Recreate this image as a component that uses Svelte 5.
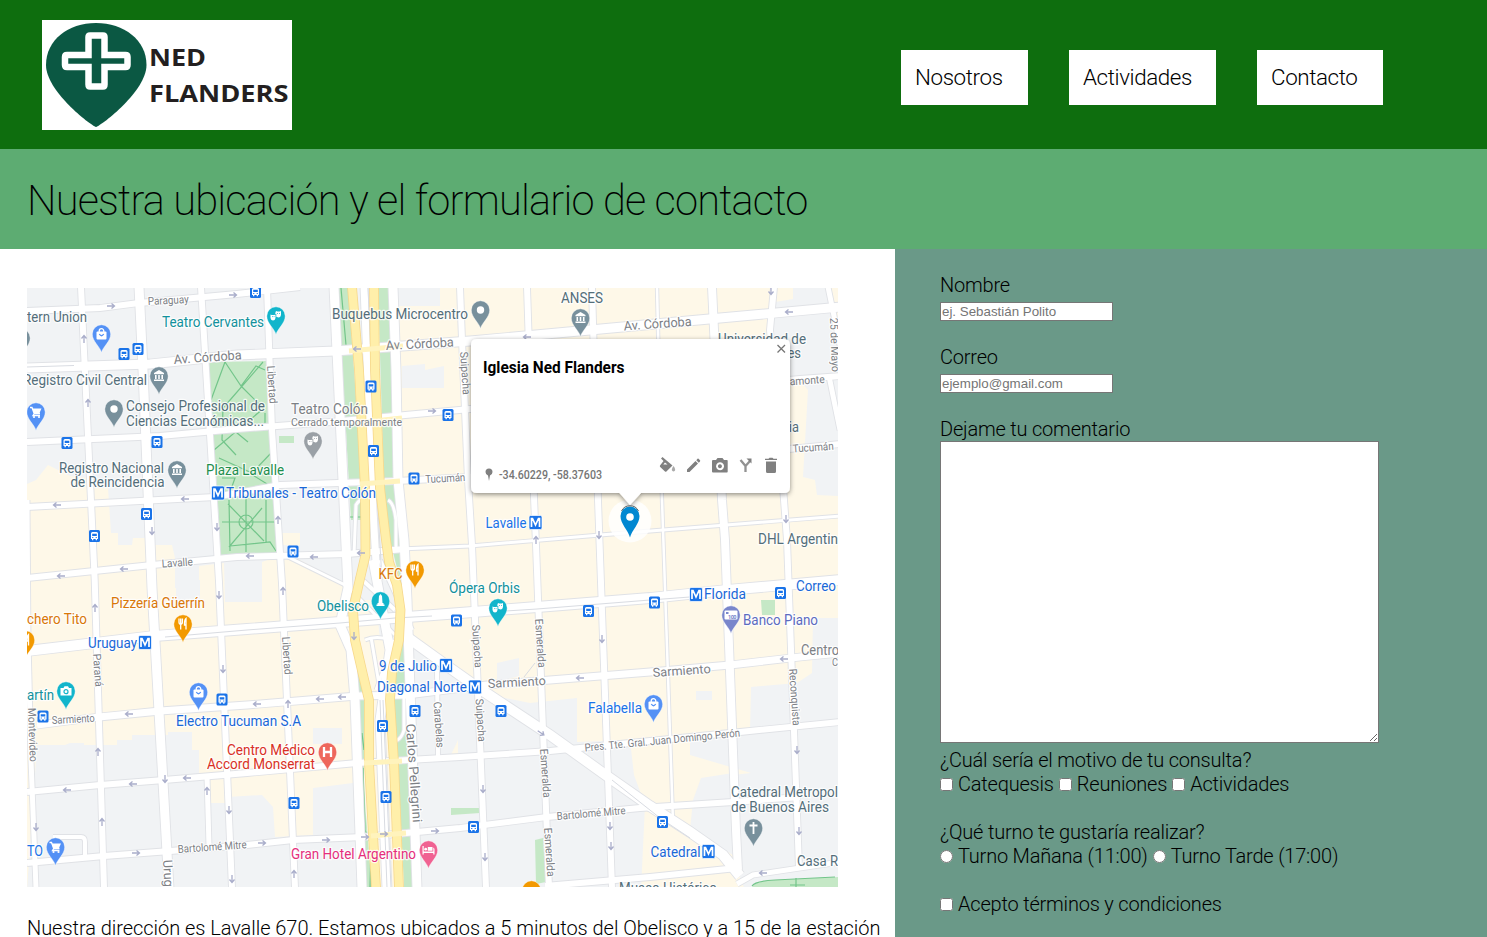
<script>
  const links = [
    { label: 'Nosotros', width: 127 },
    { label: 'Actividades', width: 147 },
    { label: 'Contacto', width: 126 }
  ];

  const grays = [
    'M27 288H440V306H397L400 480L405 600H358L347 585L300 560H278V545H300V533H282L280 555L262 562V602H225L224 563L199 566V588H175V558L172 545H155V538H133L132 545H118V533H111L108 488H95L88 478L70 476L48 465L36 480L27 484Z',
    'M37 745H65L70 743H84V745H117V740H132V735H168V732H192V750H199V776H210V803H227V797L262 795L273 807L275 837L313 835V788L353 783L360 890H27Z',
    'M400 625L470 690L458 700V740L450 757V800H410L405 700Z',
    'M405 760L458 757V690H475L500 697L530 703L577 698V742L630 740L634 775L645 805L641 890H405Z',
    'M402 366L425 364V370L444 366V388H402Z',
    'M497 663L519 658V676L497 682Z',
    'M313 728H342V744H313ZM176 580H200V605H176ZM375 590L410 590L412 640H380Z',
    'M775 302L793 299V288H829L838 320V496L817 495L815 480L803 477L808 390L798 378H770Z',
    'M813 618H838V890H745L737 870L733 775L751 773L690 755V738L750 732L751 687L797 683L812 673Z',
    'M696 691H712V700H696ZM693 800L701 778L733 773V855L690 830Z'
  ];

  const greens = [
    'M209 362L267 361L278 553L221 555Z',
    'M338 288H348L365 520H351Z',
    'M378 288H389L396 400L400 480L405 600L385 520Z',
    'M353 660L364 676V790L372 890H366L361 830Z',
    'M391 670L404 630L408 700L417 887H404L398 763Z',
    'M279 436H294V443H279ZM451 808H480V813L451 815ZM535 840L543 838L546 882L536 884ZM761 600H775V615H762Z',
    'M752 887Q755 881 775 880L838 877V887Z'
  ];

  const streets = [
    ['M27 311L100 308L139 303L237 294L300 287', 6],
    ['M27 368L150 364L237 355L335 351L470 341L590 330L720 318L840 307', 9],
    ['M27 442L160 436L237 429L330 422L470 409L800 379L840 376', 6],
    ['M27 507L215 497L280 485L397 481L470 477L800 448L840 444', 6],
    ['M27 578L152 565L237 557L347 554L405 549', 6],
    ['M400 549L470 546L600 535L840 516', 3],
    ['M37 725L99 717L160 711L247 705L357 696L407 695L487 685L550 680L650 672L730 665L800 657L840 653', 7],
    ['M27 792L100 785L164 780L247 773L357 763L460 757L550 751L620 744L740 732L840 722', 6],
    ['M27 863L104 856L170 851L247 845L293 840L363 837L460 828L547 817L640 808L733 802L800 797', 6],
    ['M545 886L650 877L737 868', 6],
    ['M737 884L753 875L800 868L840 862', 5],
    ['M27 500L28 640L31 760L36 888', 5],
    ['M81 287L94.7 580L104 888', 6],
    ['M139 287L143 370L152 588L169 888', 9],
    ['M201 287L219 582L232 888', 6],
    ['M207 776L209 846', 5],
    ['M53 837H81Q85 837 85 842V856', 4],
    ['M267 287L272 430L282 584L295 888', 6],
    ['M460 287L462 340L468 480L472 545L486 888', 6],
    ['M527 287L534 497L536 545L549 888', 6],
    ['M592 287L598 500L612 888', 6],
    ['M657 287L662 500L673 822', 2.5],
    ['M712 287L722 500L725 540L736 830L738 870', 8],
    ['M774 287L770 330L784 500L787 540L799 868', 6],
    ['M828 287L840 345M829 376L840 430', 5],
    ['M437 670L438 757', 4],
    ['M286 556L347 586L395 635', 3],
    ['M357 575L395 610M380 560L412 630', 4],
    ['M27 651L154 636L247 629L340 622L407 617L460 613L537 607L650 598L727 590L840 580', 10],
    ['M365 640Q376 635 392 640M371 637L380 690M394 640L376 690', 3],
    ['M407 637L450 668L477 687L550 735L607 776L650 806L690 832L723 855L740 876', 10],
    ['M334 287L348 588L340 625L351 650L355 700L362 888', 9],
    ['M393 287L396 370L398 480L404 540L407 600L409 660L417 888', 9],
    ['M364 287L373 510L377 580', 7],
    ['M373 560L390 650L380 720L387 888', 9],
    ['M354 555L356 505Q360 498 366 499M388 500Q394 503 396 520V548M404 690V730Q402 738 396 741', 3]
  ];

  const avenues = [
    'M352 287L359 370L365 488L365.5 555L359 583L353 610L355 640L363 675L369 700L369 763L376 888',
    'M374 287L375 370L380 488L386 540L389 562L397 585L400.5 610L399 640L392 672L390 700L394 763L399 888'
  ];

  const paths = [
    'M225 362L241 386L256 366L265 370M225 362L211 400M263 362L224 407M241 386L263 408M223 407L222 440L236 455M264 408L214 450M219 458L252 473L272 452M251 474L272 487M222 478H235L229 495M265 413V430M231 428L248 442',
    'M228 504L264 541M229 547L262 508M222 522H276M246 498V552M229 500L230 551M230 546L270 542L276 551M266 500V543M239 522A7 7 0 1 0 253 522A7 7 0 1 0 239 522',
    'M341 288L346 345M362 733L364 750M363 768L365 830L371 845L370 888M348 517H362',
    'M752 886Q755 881 775 880L835 877M796 878V887M790 885H805'
  ];

  const pins = [
    [276, 316, '#12b5cb', 'mask'], [101.5, 334, '#5491f5', 'bag'], [159, 376, '#78909c', 'bank'],
    [114, 409, '#78909c', 'dot'], [36, 412, '#5491f5', 'cart'], [177, 470, '#78909c', 'bank'],
    [313, 441, '#9aa0a6', 'mask'], [480.5, 310, '#78909c', 'dot'], [580.5, 318, '#78909c', 'bank'],
    [415, 570, '#f29900', 'food'], [380.5, 601, '#12b5cb', 'obelisk'], [498, 608, '#12b5cb', 'mask'],
    [183, 624, '#f29900', 'food'], [25.5, 640, '#f29900', 'food'], [66, 691, '#12b5cb', 'camera'],
    [198.5, 692, '#5491f5', 'bag'], [327.5, 752, '#ee675c', 'hospital'], [428.5, 850, '#f06292', 'bed'],
    [653.5, 704, '#5491f5', 'bag'], [731, 615, '#7986cb', 'money'], [753.5, 828, '#78909c', 'cross'],
    [55.5, 847, '#5491f5', 'cart'], [21, 338, '#78909c', 'dot'], [531.5, 890, '#f29900', 'plain']
  ];

  const buses = [
    [255.5, 292], [124, 354], [138, 349], [67, 443], [157, 442], [146.5, 514], [94.5, 536], [371, 386.5],
    [448, 415], [373.5, 451], [414, 478.5], [293, 551.5], [588.5, 611], [654.5, 602.5], [780.5, 593],
    [456.5, 620.5], [222, 699.5], [43, 716.5], [415, 711], [382.5, 726], [501, 711], [386, 797],
    [294, 803], [473.5, 827], [662.5, 822]
  ];

  const metros = [[218, 493], [535.5, 522.5], [145, 642.5], [446, 665.5], [475, 687], [696, 594.5], [708.5, 851.5]];

  // x, y, angle in degrees (0 points right)
  const arrows = [
    [111, 306, 0], [233, 295, 0], [84, 339, -90], [88, 403, -90], [57, 505, 180], [185, 499, 180],
    [152, 531, 90], [217, 527, 90], [61, 576, 180], [124, 569, 180], [250, 556, 180], [314, 557, 180],
    [361, 553, 180], [278, 520, -90], [357, 349, 180], [432, 411, 0], [527, 337, 180], [771, 291, 90],
    [789, 312, 180], [536, 540, -90], [599, 535, 90], [786, 519, 90], [95, 608, -90], [219, 595, 90],
    [223, 669, 90], [283, 591, -90], [354, 636, 90], [129, 714, 180], [288, 704, -90], [257, 704, 180],
    [320, 699, 180], [342, 697, 180], [98, 752, -90], [67, 790, 180], [133, 784, 180], [165, 779, 90],
    [187, 778, 180], [207, 791, -90], [36, 827, 90], [102, 822, -90], [136, 853, 0], [229, 810, 90],
    [232, 879, 90], [262, 843, 0], [326, 840, 0], [365, 837, 0], [384, 834, 0], [435, 831, 0], [294, 874, -90],
    [602, 639, 90], [580, 678, 180], [541, 733, 35], [483, 789, 90], [485, 857, 90], [610, 826, 90],
    [611, 846, 90], [784, 659, 180], [797, 750, 90], [799, 831, 90], [763, 873, 180]
  ];

  const slate = '#546e7a';
  const teal = '#12919c';
  const blue = '#1a68d8';
  const amber = '#d97708';
  const street = '#7c8085';
  // text, x, baseline, width, size, fill, rotation
  const labels = [
    ['Paraguay', 148, 305, 41, 11, street, -3],
    ['tern Union', 27, 322, 60, 14, slate, 0],
    ['Teatro Cervantes', 162, 326.5, 102, 14, teal, 0],
    ['Buquebus Microcentro', 332, 319, 136, 14, slate, 0],
    ['ANSES', 561, 302.5, 42, 14, slate, 0],
    ['Av. Córdoba', 174, 364, 68, 13, street, -4],
    ['Av. Córdoba', 386, 350, 68, 13, street, -3],
    ['Av. Córdoba', 624, 330.5, 68, 13, street, -4],
    ['Registro Civil Central', 23, 385, 124, 14, slate, 0],
    ['Consejo Profesional de', 126, 411, 139, 14, slate, 0],
    ['Ciencias Económicas...', 126, 425.5, 138, 14, slate, 0],
    ['Libertad', 267, 366, 38, 11, street, 86],
    ['Teatro Colón', 291, 414, 77, 14, street, 0],
    ['Cerrado temporalmente', 291, 426, 111, 11.5, street, 0],
    ['Registro Nacional', 59, 473, 105, 14, slate, 0],
    ['de Reincidencia', 70.5, 487, 94, 14, slate, 0],
    ['Plaza Lavalle', 206, 475, 78, 14, '#1e8e4e', 0],
    ['Tribunales - Teatro Colón', 226, 498, 150, 14, blue, 0],
    ['Suipacha', 460, 352, 43, 11, street, 86],
    ['Tucumán', 425.5, 483, 40, 11, street, -3],
    ['Universidad de', 718, 343.5, 88, 14, slate, 0],
    ['Buenos Aires', 725, 358, 76, 14, slate, 0],
    ['Viamonte', 781, 386, 44, 11, street, -4],
    ['Francia', 757, 432, 42, 14, slate, 0],
    ['Tucumán', 793, 452.5, 41, 11, street, -4],
    ['25 de Mayo', 830, 318, 54, 11, street, 88],
    ['Lavalle', 485.5, 528, 41, 14, '#1a73e8', 0],
    ['DHL Argentin', 758, 543.5, 80, 14, slate, 0],
    ['Lavalle', 162, 567.5, 31, 11, street, -4],
    ['KFC', 378.5, 579, 24, 14, amber, 0],
    ['Pizzería Güerrín', 111, 608, 94, 14, amber, 0],
    ['chero Tito', 27, 624, 60, 14, amber, 0],
    ['Obelisco', 317, 610.5, 52, 14, teal, 0],
    ['Ópera Orbis', 449, 592.5, 71, 14, teal, 0],
    ['Uruguay', 88, 647.5, 49, 14, blue, 0],
    ['Florida', 704, 599, 42, 14, blue, 0],
    ['Correo', 796, 591, 40, 14, blue, 0],
    ['Banco Piano', 743, 625, 75, 14, '#5c6bc0', 0],
    ['Libertad', 282, 637, 38, 11, street, 86],
    ['Paraná', 93, 654, 33, 11, street, 86],
    ['Suipacha', 472, 625, 43, 11, street, 86],
    ['Esmeralda', 535, 619, 49, 11, street, 86],
    ['Esmeralda', 540, 749, 49, 11, street, 86],
    ['Esmeralda', 544, 828, 49, 11, street, 86],
    ['Suipacha', 475.5, 699, 43, 11, street, 86],
    ['9 de Julio', 379, 671, 58, 14, blue, 0],
    ['Diagonal Norte', 377, 692, 90, 14, blue, 0],
    ['Sarmiento', 488, 688, 58, 12.5, street, -3],
    ['Sarmiento', 653, 677, 58, 12.5, street, -4],
    ['Sarmiento', 52, 724, 43, 11, street, -3],
    ['Centro', 801, 655, 38, 14, street, 0],
    ['C', 832, 666, 6, 11, street, 0],
    ['artín', 27, 700, 27, 14, teal, 0],
    ['Montevideo', 28, 708, 54, 11, street, 88],
    ['Electro Tucuman S.A', 176, 726, 125, 14, blue, 0],
    ['Falabella', 588, 712.5, 54, 14, '#1a73e8', 0],
    ['Reconquista', 789, 669, 57, 11, street, 86],
    ['Carabelas', 433.5, 702, 46, 11, street, 86],
    ['Carlos Pellegrini', 406, 724, 99, 13, street, 86],
    ['Centro Médico', 227, 754.5, 88, 14, '#d93025', 0],
    ['Accord Monserrat', 207, 769, 108, 14, '#d93025', 0],
    ['Pres. Tte. Gral. Juan Domingo Perón', 585, 751.5, 156, 11, street, -5.5],
    ['Catedral Metropol', 731, 797, 107, 14, slate, 0],
    ['de Buenos Aires', 731, 811.5, 98, 14, slate, 0],
    ['Bartolomé Mitre', 178, 853, 69, 11, street, -4],
    ['Bartolomé Mitre', 557, 820, 69, 11, street, -5],
    ['TO', 27, 855.5, 16, 14, '#1a73e8', 0],
    ['Gran Hotel Argentino', 291, 858.5, 125, 14, '#e52e7c', 0],
    ['Catedral', 650.5, 856.5, 50, 14, blue, 0],
    ['Casa R', 797, 866, 41, 14, slate, 0],
    ['Museo Histórico', 619, 893, 98, 14, slate, 0],
    ['Urug', 163, 860, 27, 13, street, 87]
  ];
</script>

<main>
  <header>
    <svg class="logo" width="250" height="110" viewBox="42 20 250 110" role="img" aria-label="Ned Flanders">
      <rect x="42" y="20" width="250" height="110" fill="#fff" />
      <path d="M96 127C90 125 46 91 46 65C46 40 68 23 96 23S146.500 40 146.500 65C146.500 91 102 125 96 127Z" fill="#0b5843" />
      <path d="M90 35.500H103Q104.500 35.500 104.500 37V55H125.500Q127.500 55 127.500 57V65Q127.500 67 125.500 67H104.500V84.500Q104.500 86.500 103 86.500H90Q88.500 86.500 88.500 84.500V67H67Q65 67 65 65V57Q65 55 67 55H88.500V37Q88.500 35.500 90 35.500Z" fill="none" stroke="#fff" stroke-width="6.500" />
      <g class="brand">
        <text x="149" y="65.500" textLength="57" lengthAdjust="spacingAndGlyphs">NED</text>
        <text x="149" y="101.500" textLength="139.500" lengthAdjust="spacingAndGlyphs">FLANDERS</text>
      </g>
    </svg>
    <nav>
      {#each links as link}
        <a href="#top" style="width: {link.width}px">{link.label}</a>
      {/each}
    </nav>
  </header>

  <section class="title"><h1>Nuestra ubicación y el formulario de contacto</h1></section>

  <div class="columns">
    <section class="place">
      <svg class="map" width="811" height="599" viewBox="27 288 811 599">
        <defs>
          <filter id="lift" x="-5%" y="-5%" width="110%" height="115%">
            <feDropShadow dx="0" dy="1.500" stdDeviation="2.500" flood-opacity=".45" />
          </filter>
        </defs>
        <rect x="27" y="288" width="811" height="599" fill="#fef8e8" />
        {#each grays as d}<path {d} fill="#f1f3f5" />{/each}
        {#each greens as d}<path {d} fill="#c5e8c6" />{/each}
        {#each paths as d}<path {d} fill="none" stroke="#73c58a" stroke-width="1.200" />{/each}
        {#each streets as [d, w]}<path {d} fill="none" stroke="#e0e2e6" stroke-width={w + 1.8} />{/each}
        {#each streets as [d, w]}<path {d} fill="none" stroke="#fff" stroke-width={w} />{/each}
        <path d="M27 367L74 365.500M165 637L247 630L340 623L395 618L432 616M490 612L537 609L650 600L690 597M368 287L378 510L382 580M383 700L391 888M380 700L387 888M612 780L660 818L690 838M524 677L535 663" fill="none" stroke="#d9dce2" stroke-width="1" />
        {#each avenues as d}
          <path {d} fill="none" stroke="#f7d88c" stroke-width="9.800" />
          <path {d} fill="none" stroke="#ffefaa" stroke-width="8.200" />
        {/each}
        <path d="M349 351L403 346M356 423L402 418M360 484L400 481M364 763L402 761M371 836L406 833" stroke="#fff3bd" stroke-width="5" />

        {#each arrows as [x, y, a]}
          <path transform="translate({x} {y}) rotate({a})" d="M-4 0H3.500M0.500 -2.500L3.500 0L0.500 2.500" fill="none" stroke="#a9adca" stroke-width="1.300" />
        {/each}

        {#each buses as [x, y]}
          <g transform="translate({x} {y})">
            <rect x="-5.500" y="-6" width="11" height="12" rx="1.500" fill="#1a73e8" />
            <path d="M-3.500 -2.500Q-3.500 -4 -2 -4H2Q3.500 -4 3.500 -2.500V3H2.500V4.200H1.200V3H-1.200V4.200H-2.500V3H-3.500Z" fill="#fff" />
            <path d="M-2.300 -2.300H2.300V0H-2.300ZM-2.300 1H-1.200V2H-2.300ZM1.200 1H2.300V2H1.200Z" fill="#1a73e8" />
          </g>
        {/each}

        {#each pins as [x, y, fill, kind]}
          <g transform="translate({x} {y})">
            <path d="M0 18.500C-1.500 12.500 -9.200 7.500 -9.200 0A9.200 9.200 0 1 1 9.200 0C9.200 7.500 1.500 12.500 0 18.500Z" {fill} stroke="#fff" stroke-opacity=".6" stroke-width=".7" />
            {#if kind === 'dot'}
              <circle r="3.700" fill="#fff" />
            {:else if kind === 'bag'}
              <path d="M-2.300 -2V-3A2.300 2.300 0 0 1 2.300 -3V-2" fill="none" stroke="#fff" stroke-width="1.300" />
              <rect x="-5" y="-2.500" width="10" height="8" rx="1" fill="#fff" />
              <path d="M-2.200 0Q0 3.500 2.200 0" fill="none" stroke={fill} stroke-width="1.300" />
            {:else if kind === 'cart'}
              <path d="M-6 -4.500H-4L-1.800 1.500H4M-1.800 1.500L-3 3.500H4" fill="none" stroke="#fff" stroke-width="1.300" />
              <path d="M-3.800 -3.500H5.500L3.500 1H-2Z" fill="#fff" />
              <circle cx="-2" cy="5" r="1.100" fill="#fff" /><circle cx="3" cy="5" r="1.100" fill="#fff" />
            {:else if kind === 'bank'}
              <path d="M0 -6L5 -3V-1.800H-5V-3ZM-4 -1H-2.400V3H-4ZM-.8 -1H.8V3H-.8ZM2.400 -1H4V3H2.400ZM-5 3.500H5V5H-5Z" fill="#fff" />
            {:else if kind === 'food'}
              <path d="M-4 -5.500V-2Q-4 .3 -2.300 .3V5.500M-2.300 -5.500V0M-.6 -5.500V-2Q-.6 .3 -2.300 .3M3 5.500V-5.500Q1.300 -4 1.500 1H3" fill="none" stroke="#fff" stroke-width="1.300" />
            {:else if kind === 'mask'}
              <path d="M-5.500 -1.500Q-3 -.5 -.5 -1.500V2Q-1 4.500 -3 4.500T-5.500 2ZM0 -5Q2.500 -4 5 -5V-1Q4.500 1.500 2.500 1.500L.3 .7V-2.300H-1Z" fill="#fff" />
              <path d="M-4 .6H-3.300M-2.300 .6H-1.600M1.300 -2.500H2M3.300 -2.500H4" stroke={fill} stroke-width="1" />
            {:else if kind === 'obelisk'}
              <path d="M0 -7L1.500 -5L2 2H3V3.500H4V5H-4V3.500H-3V2H-2L-1.500 -5Z" fill="#fff" />
            {:else if kind === 'camera'}
              <path d="M-5.500 -3H-2.500L-1.500 -4.800H2L3 -3H5.500V4.500H-5.500Z" fill="#fff" />
              <circle cy=".7" r="2" fill="none" stroke={fill} stroke-width="1.200" />
            {:else if kind === 'hospital'}
              <path d="M-3.500 -5V5M3.500 -5V5M-3.500 0H3.500" stroke="#fff" stroke-width="2.300" />
            {:else if kind === 'bed'}
              <path d="M-6 -4H-4.800V1.500H4.800V-2.500Q6 -2 6 -.5V4.500H4.800V3H-4.800V4.500H-6ZM-.7 -3H4V.8H-.7Z" fill="#fff" /><circle cx="-2.800" cy="-.8" r="1.400" fill="#fff" />
            {:else if kind === 'money'}
              <rect x="-6.500" y="-4.500" width="13" height="9" rx="1" fill="#fff" />
              <path d="M-5 -3H-2.500V-1H-5Z" {fill} />
              <text x="-3" y="3.500" font-size="5.500" font-weight="700" textLength="8.500" {fill}>100</text>
            {:else if kind === 'cross'}
              <path d="M0 -6V6M-4 -2.500H4" stroke="#fff" stroke-width="1.800" />
            {/if}
          </g>
        {/each}

        <g class="labels">
          {#each labels as [text, x, y, w, size, fill, turn]}
            <text transform="translate({x} {y}) rotate({turn})" font-size={size} {fill} textLength={w} lengthAdjust="spacingAndGlyphs">{text}</text>
          {/each}
        </g>

        {#each metros as [x, y]}
          <g transform="translate({x} {y})">
            <rect x="-6.500" y="-7" width="13" height="14" rx="1.500" fill="#1a73e8" stroke="#fff" stroke-width=".7" />
            <path d="M-4 4.500V-4H-3L0 2.500L3 -4H4V4.500" fill="none" stroke="#fff" stroke-width="1.700" />
          </g>
        {/each}

        <circle cx="630" cy="521" r="21.500" fill="#fff" fill-opacity=".82" />
        <path filter="url(#lift)" d="M477 339H784Q790 339 790 345V487Q790 493 784 493H641L630 505L619.500 493H477Q471 493 471 487V345Q471 339 477 339Z" fill="#fff" />
        <path d="M630 537.500C628 530 620.500 524 620.500 516A9.500 9.500 0 0 1 639.500 516C639.500 524 632 530 630 537.500Z" fill="#0288d1" />
        <path d="M621.500 511A9.500 9.500 0 0 1 638.500 511" fill="none" stroke="#5e666b" stroke-width="1" />
        <circle cx="630" cy="517" r="3.800" fill="#fff" />
        <path d="M777.500 345L785 352.500M785 345L777.500 352.500" stroke="#757575" stroke-width="1.300" />
        <text x="483" y="372.500" font-size="16" font-weight="700" textLength="141.500" lengthAdjust="spacingAndGlyphs">Iglesia Ned Flanders</text>
        <text x="499" y="479" font-size="12" font-weight="500" fill="#757575" textLength="103" lengthAdjust="spacingAndGlyphs">-34.60229, -58.37603</text>
        <g fill="#808080">
          <path d="M489 481L488 475.500Q485.500 474.500 485.500 472A3.500 3.500 0 0 1 492.500 472Q492.500 474.500 490 475.500Z" />
          <path d="M662.500 457L661 458.500L663.500 461L660 465.500Q659.500 466.300 660.200 467L665 471.500Q665.700 472 666.400 471.500L672.500 465.500L664.500 458.700ZM665 462.500L667.500 464.500H663.300Z" fill-rule="evenodd" />
          <path d="M673.500 466Q676 469.500 674.800 470.800Q673.500 472 672.200 470.800Q671 469.500 673.500 466Z" fill="#aaa" />
          <path d="M687 469.500L695.500 461L698 463.500L689.500 472H687ZM696.300 460.200L697.500 458.800Q698 458.300 698.600 458.800L700 460.300Q700.500 460.800 700 461.500L698.800 462.700Z" />
          <path d="M712 461Q712 460 713 460H716L717.500 458H722.500L724 460H727Q727.700 460 727.700 461V471.500Q727.700 472.500 727 472.500H713Q712 472.500 712 471.500ZM720 462.200A4 4 0 1 0 720.100 462.200ZM720 464.200A2 2 0 1 1 719.900 464.200Z" fill-rule="evenodd" />
          <path d="M765 460H777V458.800H773.500L772.500 457.700H769.500L768.500 458.800H765ZM766 461.500H776V471.500Q776 473 774.500 473H767.500Q766 473 766 471.500Z" />
        </g>
        <path d="M745.500 472V466L740.500 460M745.500 466L750 461" fill="none" stroke="#929292" stroke-width="2.300" />
        <path d="M746.500 458.500H751.500V463.500Z" fill="#808080" />
      </svg>
      <p>Nuestra dirección es Lavalle 670. Estamos ubicados a 5 minutos del Obelisco y a 15 de la estación</p>
    </section>

    <form>
      <label for="nombre">Nombre</label>
      <input id="nombre" type="text" placeholder="ej. Sebastián Polito" />
      <label for="correo">Correo</label>
      <input id="correo" type="email" placeholder="ejemplo@gmail.com" />
      <label for="comentario">Dejame tu comentario</label>
      <textarea id="comentario"></textarea>
      <div class="question">¿Cuál sería el motivo de tu consulta?</div>
      <div class="options">
        <label><input type="checkbox" /> Catequesis</label>
        <label><input type="checkbox" /> Reuniones</label>
        <label><input type="checkbox" /> Actividades</label>
      </div>
      <div class="question">¿Qué turno te gustaría realizar?</div>
      <div class="options">
        <label><input type="radio" name="turno" /> Turno Mañana (11:00)</label>
        <label><input type="radio" name="turno" /> Turno Tarde (17:00)</label>
      </div>
      <div class="options"><label><input type="checkbox" /> Acepto términos y condiciones</label></div>
    </form>
  </div>
</main>

<style>
  :global(body) {
    margin: 0;
    background: #fff;
  }
  main {
    height: 937px;
    overflow: hidden;
    display: flex;
    flex-direction: column;
    font-family: Roboto, sans-serif;
    font-weight: 300;
    font-size: 20px;
    line-height: 24px;
    letter-spacing: -0.2px;
    color: #000;
  }
  header {
    box-sizing: border-box;
    flex: 0 0 149px;
    display: flex;
    justify-content: space-between;
    align-items: flex-start;
    padding: 20px 104px 0 42px;
    background: #0e6e0e;
  }
  .brand {
    font: 700 22.4px 'Open Sans', sans-serif;
    letter-spacing: 0;
    fill: #231f20;
  }
  nav {
    display: flex;
    gap: 41px;
    padding-top: 30px;
  }
  nav a {
    box-sizing: border-box;
    height: 55px;
    padding-left: 14px;
    background: #fff;
    color: #000;
    font-size: 22.4px;
    letter-spacing: -0.4px;
    line-height: 55px;
    text-decoration: none;
  }
  .title {
    flex: none;
    height: 100px;
    background: #5dac72;
  }
  h1 {
    margin: 0;
    padding-left: 27px;
    font-size: 41.6px;
    font-weight: 200;
    line-height: 104px;
    letter-spacing: -0.82px;
    white-space: nowrap;
  }
  .columns {
    flex: 1;
    min-height: 0;
    display: grid;
    grid-template-columns: 895px 1fr;
  }
  .place {
    padding: 39px 0 0 27px;
  }
  .map {
    display: block;
    letter-spacing: 0;
    font-weight: 400;
  }
  .labels text {
    paint-order: stroke;
    stroke: #fff;
    stroke-opacity: 0.8;
    stroke-width: 2.5px;
    stroke-linejoin: round;
  }
  p {
    margin: 29px 0 0;
    letter-spacing: -0.045px;
    white-space: nowrap;
  }
  form {
    display: flex;
    flex-direction: column;
    align-items: flex-start;
    padding: 24px 0 0 45px;
    background: #6a9988;
  }
  form > input {
    box-sizing: border-box;
    width: 173px;
    height: 19px;
    margin: 5px 0 24px;
    padding: 1px;
    border: 1px solid #767676;
    font: 13.333px 'Liberation Sans', Arial, sans-serif;
  }
  textarea {
    box-sizing: border-box;
    flex: none;
    width: 439px;
    height: 302px;
    margin: 0 0 5px;
    border: 1px solid #767676;
  }
  .options {
    display: flex;
    gap: 5px;
    margin-bottom: 24px;
    white-space: nowrap;
  }
  .options label {
    display: flex;
    gap: 5px;
  }
  .options input {
    width: 13px;
    height: 13px;
    margin: 6px 0 0;
  }
</style>
